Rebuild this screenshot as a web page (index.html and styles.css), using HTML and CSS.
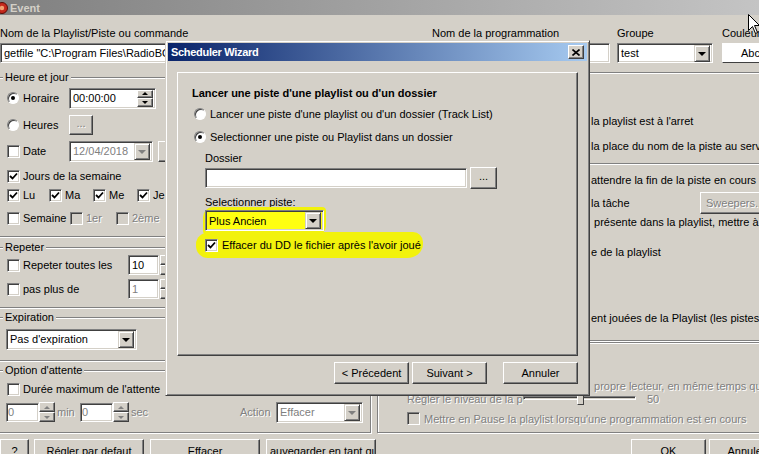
FILE: index.html
```html
<!DOCTYPE html>
<html lang="fr">
<head>
    <meta charset="UTF-8">
    <meta name="viewport" content="width=device-width, initial-scale=1.0">
    <title>Event</title>
    <link rel="stylesheet" href="styles.css">
</head>
<body>
<div class="event">
    <div class="titlebar">
        <svg class="app-icon" width="12" height="12" viewBox="0 0 12 12"><circle cx="6" cy="6" r="5.5" fill="#c4281c" stroke="#5a0d08"/><circle cx="6" cy="6" r="2.2" fill="#f2a070"/></svg>
        Event
    </div>

    <div class="top-labels">
        <span>Nom de la Playlist/Piste ou commande</span>
        <span class="lbl-prog">Nom de la programmation</span>
        <span>Groupe</span>
        <span>Couleur</span>
    </div>
    <div class="top-fields">
        <div class="edit">getfile "C:\Program Files\RadioBOSS\Music\Archive"</div>
        <div class="edit"></div>
        <div class="combo"><span class="combo-text">test</span><span class="combo-btn"><i class="arrow"></i></span></div>
        <div class="color-btn">Abc</div>
    </div>

    <div class="main">
        <div class="col-left">
            <!-- heure et jour -->
            <div class="group g-time">
                <span class="legend">Heure et jour</span>
                <div class="row">
                    <span class="opt"><i class="radio on"></i>Horaire</span>
                    <div class="edit time"><span class="time-text">00:00:00</span>
                        <span class="spin"><span class="spin-btn"><i class="tri-up"></i></span><span class="spin-btn"><i class="tri-down"></i></span></span>
                    </div>
                </div>
                <div class="row row-hours">
                    <span class="opt"><i class="radio"></i>Heures</span>
                    <div class="btn dots off">...</div>
                </div>
                <div class="row row-date">
                    <span class="opt"><i class="check"></i>Date</span>
                    <div class="combo date off"><span class="combo-text">12/04/2018</span><span class="combo-btn"><i class="arrow"></i></span></div>
                    <div class="btn date-btn"></div>
                </div>
                <div class="row row-weekdays">
                    <span class="opt"><i class="check on"><svg width="9" height="9" viewBox="0 0 9 9"><path d="M1 4 L3.5 6.5 L8 1.5" fill="none" stroke="#000" stroke-width="1.8"/></svg></i>Jours de la semaine</span>
                </div>
                <div class="row row-days">
                    <span class="day"><i class="check on"><svg width="9" height="9" viewBox="0 0 9 9"><path d="M1 4 L3.5 6.5 L8 1.5" fill="none" stroke="#000" stroke-width="1.8"/></svg></i>Lu</span>
                    <span class="day"><i class="check on"><svg width="9" height="9" viewBox="0 0 9 9"><path d="M1 4 L3.5 6.5 L8 1.5" fill="none" stroke="#000" stroke-width="1.8"/></svg></i>Ma</span>
                    <span class="day"><i class="check on"><svg width="9" height="9" viewBox="0 0 9 9"><path d="M1 4 L3.5 6.5 L8 1.5" fill="none" stroke="#000" stroke-width="1.8"/></svg></i>Me</span>
                    <span class="day"><i class="check on"><svg width="9" height="9" viewBox="0 0 9 9"><path d="M1 4 L3.5 6.5 L8 1.5" fill="none" stroke="#000" stroke-width="1.8"/></svg></i>Je</span>
                    <span class="day"><i class="check on"><svg width="9" height="9" viewBox="0 0 9 9"><path d="M1 4 L3.5 6.5 L8 1.5" fill="none" stroke="#000" stroke-width="1.8"/></svg></i>Ve</span>
                </div>
                <div class="row row-week">
                    <span class="opt week"><i class="check"></i>Semaine</span>
                    <span class="opt nth off"><i class="check dis"></i>1er</span>
                    <span class="opt off"><i class="check dis"></i>2ème</span>
                </div>
            </div>

            <!-- repeter -->
            <div class="group g-repeat">
                <span class="legend">Repeter</span>
                <div class="row">
                    <span class="opt wide"><i class="check"></i>Repeter toutes les</span>
                    <div class="edit num">10</div>
                    <span class="spin side"><span class="spin-btn"><i class="tri-up"></i></span><span class="spin-btn"><i class="tri-down"></i></span></span>
                </div>
                <div class="row row-max">
                    <span class="opt wide"><i class="check"></i>pas plus de</span>
                    <div class="edit num off">1</div>
                    <span class="spin side"><span class="spin-btn"><i class="tri-up"></i></span><span class="spin-btn"><i class="tri-down"></i></span></span>
                </div>
            </div>

            <!-- expiration -->
            <div class="group g-expire">
                <span class="legend">Expiration</span>
                <div class="row">
                    <div class="combo expire"><span class="combo-text">Pas d'expiration</span><span class="combo-btn"><i class="arrow"></i></span></div>
                </div>
            </div>

            <!-- attente -->
            <div class="group g-wait">
                <span class="legend">Option d'attente</span>
                <div class="row">
                    <span class="opt"><i class="check"></i>Durée maximum de l'attente</span>
                </div>
                <div class="row row-delay off">
                    <div class="edit small">0</div>
                    <span class="spin side"><span class="spin-btn"><i class="tri-up"></i></span><span class="spin-btn"><i class="tri-down"></i></span></span>
                    <span class="unit">min</span>
                    <div class="edit small">0</div>
                    <span class="spin side"><span class="spin-btn"><i class="tri-up"></i></span><span class="spin-btn"><i class="tri-down"></i></span></span>
                    <span class="unit">sec</span>
                    <span class="action-lbl">Action</span>
                    <div class="combo action"><span class="combo-text">Effacer</span><span class="combo-btn"><i class="arrow"></i></span></div>
                </div>
            </div>
        </div>

        <div class="col-right">
            <div class="group g-options">
                <div class="row line">la playlist est à l'arret</div>
                <div class="row line row-gap7">la place du nom de la piste au serveur</div>
                <div class="sep"></div>
                <div class="row line row-gap6">attendre la fin de la piste en cours</div>
                <div class="row line row-gap5">la tâche <div class="btn sweep off">Sweepers...</div></div>
                <div class="row line row-gap1">&nbsp;présente dans la playlist, mettre à jour</div>
                <div class="row line row-gap12">e de la playlist</div>
                <div class="row line row-gap48">ent jouées de la Playlist (les pistes</div>
            </div>
            <div class="group g-player off">
                <div class="row thin line">&nbsp;propre lecteur, en même temps que</div>
                <div class="row thin indent">
                    <span class="level-lbl">Régler le niveau de la playlist</span>
                    <span class="slider"><span class="track"></span><span class="thumb"></span></span>
                    <span class="level-val">50</span>
                </div>
                <div class="row thin indent row-pause">
                    <i class="check dis"></i>Mettre en Pause la playlist lorsqu'une programmation est en cours
                </div>
            </div>
        </div>
    </div>

    <div class="actions">
        <div class="btn help">?</div>
        <div class="btn wide-btn">Régler par defaut</div>
        <div class="btn wide-btn">Effacer</div>
        <div class="btn wide-btn save">auvegarder en tant que</div>
        <div class="btn ok">OK</div>
        <div class="btn cancel">Annuler</div>
    </div>
</div>

<!-- fenetre du wizard -->
<div class="wizard">
    <div class="wiz-title">
        Scheduler Wizard
        <div class="btn close"><svg width="8" height="7" viewBox="0 0 8 7"><path d="M0.5 0.5 L7.5 6.5 M7.5 0.5 L0.5 6.5" stroke="#000" stroke-width="1.6"/></svg></div>
    </div>
    <div class="wiz-panel">
        <div class="wiz-heading">Lancer une piste d'une playlist ou d'un dossier</div>
        <div class="row wiz-radio"><i class="radio"></i>Lancer une piste d'une playlist ou d'un dossier (Track List)</div>
        <div class="row wiz-radio"><i class="radio on"></i>Selectionner une piste ou Playlist dans un dossier</div>
        <div class="wiz-label">Dossier</div>
        <div class="row wiz-folder">
            <div class="edit folder"></div>
            <div class="btn browse">...</div>
        </div>
        <div class="wiz-label label-piste">Selectionner piste:</div>
        <div class="row wiz-combo">
            <span class="marker"><span class="combo piste"><span class="combo-text">Plus Ancien</span><span class="combo-btn"><i class="arrow"></i></span></span></span>
        </div>
        <div class="row wiz-delete">
            <i class="check on"><svg width="9" height="9" viewBox="0 0 9 9"><path d="M1 4 L3.5 6.5 L8 1.5" fill="none" stroke="#000" stroke-width="1.8"/></svg></i>Effacer du DD le fichier après l'avoir joué
        </div>
    </div>
    <div class="wiz-buttons">
        <div class="btn wiz-btn">&lt; Précedent</div>
        <div class="btn wiz-btn">Suivant &gt;</div>
        <div class="btn wiz-btn cancel-wiz">Annuler</div>
    </div>
</div>

<svg class="cursor" width="12" height="21" viewBox="0 0 12 21"><path d="M0.5 0.5 L0.5 16.5 L4.5 12.5 L7.5 19.5 L9.5 18.5 L6.5 11.5 L11.5 11.5 Z" fill="#fff" stroke="#000"/></svg>
</body>
</html>
```

FILE: styles.css
```css
* {
    box-sizing: border-box;
}
body {
    margin: 0;
    width: 759px;
    height: 454px;
    overflow: hidden;
    position: relative;
    background: #d4d0c8;
    font-family: "Liberation Sans", Arial, sans-serif;
    font-size: 11px;
    color: #000;
}
i {
    display: block;
    flex: none;
}

/* ---- controls classiques ---- */
.edit {
    display: flex;
    align-items: center;
    height: 20px;
    padding: 0 3px;
    background: #fff;
    border: 1px solid;
    border-color: #808080 #fff #fff #808080;
    box-shadow: inset 1px 1px #404040, inset -1px -1px #d4d0c8;
    white-space: nowrap;
    overflow: hidden;
}
.btn {
    display: flex;
    align-items: center;
    justify-content: center;
    background: #d4d0c8;
    border: 1px solid;
    border-color: #fff #404040 #404040 #fff;
    box-shadow: inset -1px -1px #808080;
    white-space: nowrap;
}
.combo {
    display: flex;
    align-items: center;
    height: 21px;
    padding: 2px;
    background: #fff;
    border: 1px solid;
    border-color: #808080 #fff #fff #808080;
    box-shadow: inset 1px 1px #404040, inset -1px -1px #d4d0c8;
}
.combo-text {
    flex: 1;
    padding-left: 1px;
    white-space: nowrap;
    overflow: hidden;
}
.combo-btn {
    width: 16px;
    height: 17px;
    display: flex;
    align-items: center;
    justify-content: center;
    background: #d4d0c8;
    border: 1px solid;
    border-color: #d4d0c8 #404040 #404040 #d4d0c8;
    box-shadow: inset 1px 1px #fff, inset -1px -1px #808080;
}
.arrow {
    width: 0;
    height: 0;
    border-left: 4px solid transparent;
    border-right: 4px solid transparent;
    border-top: 4px solid #000;
    margin-top: 1px;
}
.check {
    width: 13px;
    height: 13px;
    display: flex;
    align-items: center;
    justify-content: center;
    background: #fff;
    border: 1px solid;
    border-color: #808080 #fff #fff #808080;
    box-shadow: inset 1px 1px #404040, inset -1px -1px #d4d0c8;
    margin-right: 3px;
}
.check.dis {
    background: #d4d0c8;
}
.radio {
    width: 12px;
    height: 12px;
    border-radius: 50%;
    background: #fff;
    border: 1px solid;
    border-color: #808080 #fff #fff #808080;
    box-shadow: inset 1px 1px #404040;
    margin-right: 4px;
    position: relative;
}
.radio.on::after {
    content: "";
    position: absolute;
    left: 3px;
    top: 3px;
    width: 4px;
    height: 4px;
    border-radius: 50%;
    background: #000;
}
.spin {
    display: flex;
    flex-direction: column;
    width: 16px;
    height: 17px;
}
.spin.side {
    height: 20px;
}
.spin-btn {
    flex: 1;
    display: flex;
    align-items: center;
    justify-content: center;
    background: #d4d0c8;
    border: 1px solid;
    border-color: #fff #404040 #404040 #fff;
    box-shadow: inset -1px -1px #808080;
}
.tri-up, .tri-down {
    width: 0;
    height: 0;
    border-left: 3px solid transparent;
    border-right: 3px solid transparent;
}
.tri-up {
    border-bottom: 3px solid #000;
}
.tri-down {
    border-top: 3px solid #000;
}
.off, .off .combo-text, .off.edit {
    color: #808080;
    text-shadow: 1px 1px 0 #fff;
}
.off .tri-up {
    border-bottom-color: #808080;
}
.off .tri-down, .off .arrow {
    border-top-color: #808080;
}

/* ---- fenetre Event ---- */
.titlebar {
    height: 15px;
    display: flex;
    align-items: center;
    background: linear-gradient(to right, #808080, #c4c4c4);
    color: #d4d0c8;
    font-weight: bold;
}
.app-icon {
    margin-left: -4px;
    margin-right: 2px;
}
.top-labels, .top-fields {
    display: grid;
    grid-template-columns: 430px 187px 105px 1fr;
}
.top-labels {
    margin-top: 11px;
    height: 14px;
    line-height: 14px;
    white-space: nowrap;
}
.lbl-prog {
    padding-left: 2px;
}
.top-fields {
    margin-top: 3px;
    height: 20px;
}
.top-fields .edit:first-child {
    width: 425px;
}
.top-fields .edit:nth-child(2) {
    width: 180px;
}
.top-fields .combo {
    width: 96px;
    height: 20px;
}
.color-btn {
    width: 44px;
    height: 20px;
    background: #fff;
    border: 1px solid;
    border-color: #fff #404040 #404040 #fff;
    padding-left: 18px;
    line-height: 18px;
}

.main {
    display: flex;
    margin-top: 7px;
}
.col-left {
    width: 375px;
    flex: none;
    margin-left: -4px;
}
.col-right {
    flex: 1;
    min-width: 0;
    margin-left: 6px;
    margin-right: -6px;
}
.group {
    position: relative;
    border: 1px solid #808080;
    box-shadow: inset 1px 1px #fff, 1px 1px #fff;
    padding-left: 10px;
}
.legend {
    position: absolute;
    top: -7px;
    left: 6px;
    padding: 0 2px;
    line-height: 13px;
    background: #d4d0c8;
}
.row {
    display: flex;
    align-items: center;
    height: 18px;
    white-space: nowrap;
}
.opt {
    display: flex;
    align-items: center;
    width: 62px;
}

.g-time {
    margin-top: 7px;
    height: 160px;
    padding-top: 11px;
}
.row-hours { margin-top: 9px; }
.row-date { margin-top: 8px; }
.row-weekdays { margin-top: 7px; }
.row-days { margin-top: 1px; }
.row-week { margin-top: 5px; }
.time {
    width: 87px;
    height: 21px;
    padding: 0 2px 0 3px;
}
.time-text {
    flex: 1;
}
.dots {
    width: 24px;
    height: 20px;
    padding-bottom: 4px;
}
.date {
    width: 84px;
}
.date-btn {
    width: 22px;
    height: 21px;
    margin-left: 5px;
}
.row-weekdays .opt {
    width: auto;
}
.day {
    display: flex;
    align-items: center;
    width: 44px;
}
.day:first-child {
    width: 42px;
}
.week {
    width: 63px;
}
.nth {
    width: 46px;
}

.g-repeat {
    margin-top: 10px;
    height: 61px;
    padding-top: 8px;
}
.row-max { margin-top: 6px; }
.opt.wide {
    width: 121px;
}
.num {
    width: 31px;
    height: 20px;
    margin-right: 1px;
}

.g-expire {
    margin-top: 9px;
    height: 44px;
    padding-top: 12px;
    padding-left: 9px;
}
.expire {
    width: 131px;
}

.g-wait {
    margin-top: 9px;
    height: 63px;
    padding-top: 9px;
    padding-left: 9px;
}
.row-delay {
    margin-top: 5px;
}
.g-wait .opt {
    width: auto;
    padding-left: 1px;
}
.small {
    width: 33px;
    height: 19px;
    padding-left: 1px;
}
.unit {
    margin-left: 2px;
    width: 23px;
}
.action-lbl {
    margin-left: 86px;
    width: 36px;
}
.action {
    width: 87px;
}

.g-options {
    margin-top: 2px;
    height: 269px;
    padding-top: 39px;
    padding-left: 0;
}
.line {
    padding-left: 213px;
}
.row-gap7 { margin-top: 7px; }
.row-gap6 { margin-top: 6px; }
.row-gap5 { margin-top: 5px; }
.row-gap1 { margin-top: 1px; }
.row-gap12 { margin-top: 12px; }
.row-gap48 { margin-top: 48px; }
.sep {
    margin-top: 8px;
    border-top: 1px solid #808080;
    border-bottom: 1px solid #fff;
}
.sweep {
    margin-left: auto;
    width: 64px;
    height: 22px;
    justify-content: flex-start;
    padding-left: 5px;
}
.g-player {
    margin-top: 1px;
    height: 91px;
    padding-top: 36px;
    padding-left: 0;
}
.row.thin {
    height: 13px;
}
.indent {
    padding-left: 29px;
}
.level-lbl {
    width: 116px;
    overflow: hidden;
}
.slider {
    position: relative;
    width: 113px;
    height: 13px;
}
.track {
    position: absolute;
    left: 0;
    right: 0;
    top: 4px;
    height: 4px;
    border: 1px solid;
    border-color: #808080 #fff #fff #808080;
    box-shadow: inset 1px 1px #404040;
}
.thumb {
    position: absolute;
    left: 54px;
    top: -1px;
    width: 7px;
    height: 14px;
    background: #d4d0c8;
    border: 1px solid;
    border-color: #fff #404040 #404040 #fff;
}
.level-val {
    margin-left: 11px;
}
.row-pause {
    margin-top: 7px;
}
.row-pause .check {
    margin-right: 4px;
}

.actions {
    display: flex;
    margin-top: 6px;
    height: 23px;
}
.actions .btn {
    height: 23px;
}
.help {
    width: 29px;
    margin-right: 5px;
}
.wide-btn {
    width: 110px;
    margin-right: 6px;
}
.save {
    justify-content: flex-start;
    overflow: hidden;
    padding-left: 3px;
}
.ok {
    margin-left: auto;
    width: 75px;
}
.cancel {
    width: 75px;
    margin-left: 3px;
    margin-right: -25px;
}

/* ---- Scheduler Wizard (fenetre par dessus) ---- */
.wizard {
    position: absolute;
    left: 165px;
    top: 40px;
    width: 425px;
    height: 356px;
    padding: 2px;
    background: #d4d0c8;
    border: 1px solid;
    border-color: #d4d0c8 #404040 #404040 #d4d0c8;
    box-shadow: inset 1px 1px #fff, inset -1px -1px #808080;
}
.wiz-title {
    height: 18px;
    display: flex;
    align-items: center;
    padding-left: 3px;
    background: linear-gradient(to right, #0a246a, #a6caf0);
    color: #fff;
    font-weight: bold;
    letter-spacing: -0.3px;
}
.close {
    margin-left: auto;
    margin-right: 3px;
    width: 16px;
    height: 14px;
}
.wiz-panel {
    margin: 11px 9px 0;
    height: 284px;
    padding: 13px 0 0 14px;
    border: 1px solid;
    border-color: #fff #404040 #404040 #fff;
    box-shadow: inset -1px -1px #808080;
}
.wiz-heading {
    height: 14px;
    line-height: 14px;
    font-weight: bold;
}
.wiz-radio {
    margin-top: 5px;
    margin-left: 2px;
}
.wiz-radio .radio {
    margin-right: 4px;
}
.wiz-label {
    margin-top: 5px;
    margin-left: 13px;
    height: 14px;
    line-height: 14px;
}
.wiz-folder {
    margin-top: 4px;
    margin-left: 13px;
}
.folder {
    width: 262px;
}
.browse {
    width: 27px;
    height: 22px;
    margin-left: 3px;
    padding-bottom: 4px;
}
.label-piste {
    margin-top: 8px;
}
.wiz-combo {
    margin-top: 1px;
    margin-left: 13px;
    height: 21px;
}
.marker {
    display: block;
    padding: 3px 2px;
    margin: -3px -2px;
    background: #f2f20c;
    border-radius: 10px 4px 8px 3px;
}
.piste {
    width: 119px;
    background: #ffff10;
}
.wiz-delete {
    margin-top: 1px;
    margin-left: 4px;
    width: 227px;
    height: 26px;
    padding-left: 9px;
    background: #f2f20c;
    border-radius: 14px 10px 16px 12px / 12px 10px 14px 12px;
}
.wiz-delete .check {
    margin-right: 4px;
}
.wiz-buttons {
    display: flex;
    justify-content: flex-end;
    margin: 6px 9px 0;
}
.wiz-btn {
    width: 75px;
    height: 22px;
    margin-left: 3px;
}
.cancel-wiz {
    margin-left: 16px;
}

.cursor {
    position: absolute;
    left: 748px;
    top: 14px;
}
```
